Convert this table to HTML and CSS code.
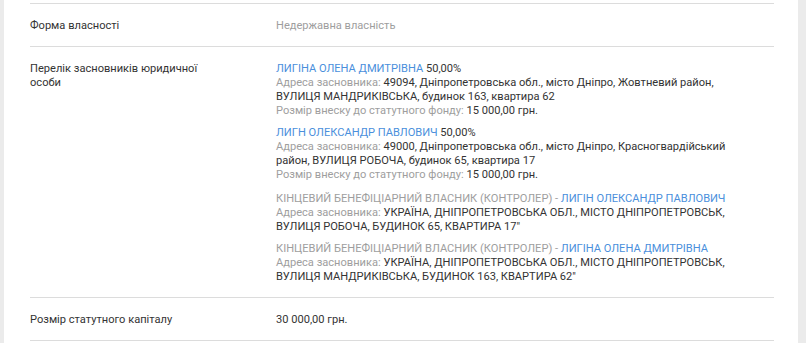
FILE: index.html
```html
<!DOCTYPE html>
<html lang="uk">
<head>
<meta charset="utf-8">
<link rel="stylesheet" href="styles.css">
</head>
<body>
<div class="card">
  <div class="row">
    <div class="label">Форма власності</div>
    <div class="value muted">Недержавна власність</div>
  </div>
  <div class="row">
    <div class="label">Перелік засновників юридичної особи</div>
    <div class="value">
      <div class="block">
        <div><span class="link">ЛИГІНА ОЛЕНА ДМИТРІВНА</span> 50,00%</div>
        <div><span class="muted">Адреса засновника:</span> 49094, Дніпропетровська обл., місто Дніпро, Жовтневий район, ВУЛИЦЯ МАНДРИКІВСЬКА, будинок 163, квартира 62</div>
        <div><span class="muted">Розмір внеску до статутного фонду:</span> 15 000,00 грн.</div>
      </div>
      <div class="block">
        <div><span class="link">ЛИГН ОЛЕКСАНДР ПАВЛОВИЧ</span> 50,00%</div>
        <div><span class="muted">Адреса засновника:</span> 49000, Дніпропетровська обл., місто Дніпро, Красногвардійський район, ВУЛИЦЯ РОБОЧА, будинок 65, квартира 17</div>
        <div><span class="muted">Розмір внеску до статутного фонду:</span> 15 000,00 грн.</div>
      </div>
      <div class="block beneficiary">
        <div><span class="muted">КІНЦЕВИЙ БЕНЕФІЦІАРНИЙ ВЛАСНИК (КОНТРОЛЕР) - </span><span class="link">ЛИГІН ОЛЕКСАНДР ПАВЛОВИЧ</span></div>
        <div><span class="muted">Адреса засновника:</span> УКРАЇНА, ДНІПРОПЕТРОВСЬКА ОБЛ., МІСТО ДНІПРОПЕТРОВСЬК, ВУЛИЦЯ РОБОЧА, БУДИНОК 65, КВАРТИРА 17"</div>
      </div>
      <div class="block">
        <div><span class="muted">КІНЦЕВИЙ БЕНЕФІЦІАРНИЙ ВЛАСНИК (КОНТРОЛЕР) - </span><span class="link">ЛИГІНА ОЛЕНА ДМИТРІВНА</span></div>
        <div><span class="muted">Адреса засновника:</span> УКРАЇНА, ДНІПРОПЕТРОВСЬКА ОБЛ., МІСТО ДНІПРОПЕТРОВСЬК, ВУЛИЦЯ МАНДРИКІВСЬКА, БУДИНОК 163, КВАРТИРА 62"</div>
      </div>
    </div>
  </div>
  <div class="row last">
    <div class="label">Розмір статутного капіталу</div>
    <div class="value">30 000,00 грн.</div>
  </div>
</div>
</body>
</html>
```

FILE: styles.css
```css
html, body {
  margin: 0;
  padding: 0;
  background: #ebebeb;
}
body {
  font-family: Roboto, "Noto Sans", sans-serif;
  font-size: 11.1px;
  line-height: 14px;
  color: #333;
}
.card {
  margin-left: 4px;
  width: 794px;
  min-height: 343px;
  background: #fff;
  box-sizing: border-box;
  padding: 3px 24px 0 26px;
}
.row {
  display: flex;
  border-top: 1px solid #dcdcdc;
  padding: 15px 0 13px;
}
.row.last {
  border-bottom: 1px solid #dcdcdc;
}
.label {
  width: 190px;
  margin-right: 56px;
  flex: none;
}
.value {
  flex: 1;
  padding-right: 20px;
}
.muted {
  color: #9e9e9e;
}
.link {
  color: #4a8fdc;
}
.block + .block {
  margin-top: 8px;
}
.block.beneficiary {
  margin-top: 10px;
}
```
